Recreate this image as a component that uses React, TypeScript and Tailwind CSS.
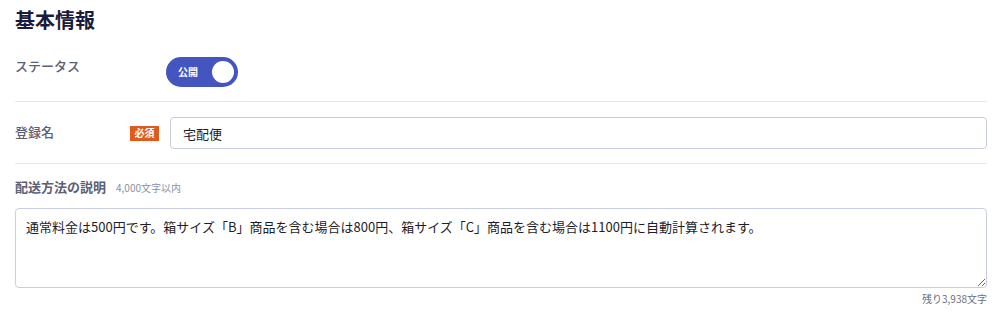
import React from "react";

export default function App() {
  const font = { fontFamily: '"Noto Sans CJK JP", "Noto Sans", sans-serif' };
  return (
    <div className="w-[1004px] h-[315px] bg-white pl-[15px] pr-[17px] text-[13px]" style={font}>
      <h1 className="pt-[6px] text-[20px] leading-[28px] font-bold text-[#1b1b3d]">基本情報</h1>

      <div className="flex items-start pt-[23px] pb-[14px] border-b border-[#e6e8ee]">
        <div className="w-[151px] pt-[1px] leading-[16px] font-medium text-[#5b6074]">ステータス</div>
        <button className="relative w-[72px] h-[30px] rounded-full bg-[#4455c0] flex items-center">
          <span className="pl-[12px] text-[10px] font-bold text-white leading-none">公開</span>
          <span className="absolute right-[4px] top-[4px] w-[22px] h-[22px] rounded-full bg-white" />
        </button>
      </div>

      <div className="flex items-center pt-[15px] pb-[14px] border-b border-[#e6e8ee]">
        <div className="w-[115px] font-medium text-[#5b6074] leading-[16px] -mt-[2px]">登録名</div>
        <span className="w-[29px] h-[15px] flex items-center justify-center bg-[#e05a1c] text-white text-[10px] font-bold leading-none">必須</span>
        <input
          className="ml-[11px] flex-1 h-[32px] rounded-[4px] border border-[#c8cde0] px-[12px] text-[13px] text-[#1d1d2b] outline-none"
          defaultValue="宅配便"
          style={font}
        />
      </div>

      <div className="flex items-baseline pt-[13px]">
        <span className="font-bold text-[#5b6074] leading-[20px]">配送方法の説明</span>
        <span className="ml-[10px] text-[10px] text-[#8a8fa0]">4,000文字以内</span>
      </div>
      <textarea
        className="mt-[11px] block w-full h-[80px] rounded-[4px] border border-[#c8cde0] px-[10px] py-[8px] text-[13px] leading-[20px] text-[#1d1d2b] outline-none"
        defaultValue="通常料金は500円です。箱サイズ「B」商品を含む場合は800円、箱サイズ「C」商品を含む場合は1100円に自動計算されます。"
        style={font}
      />
      <div className="text-right text-[10px] text-[#6b7080] leading-[14px] mt-[4px]">残り3,938文字</div>
    </div>
  );
}
